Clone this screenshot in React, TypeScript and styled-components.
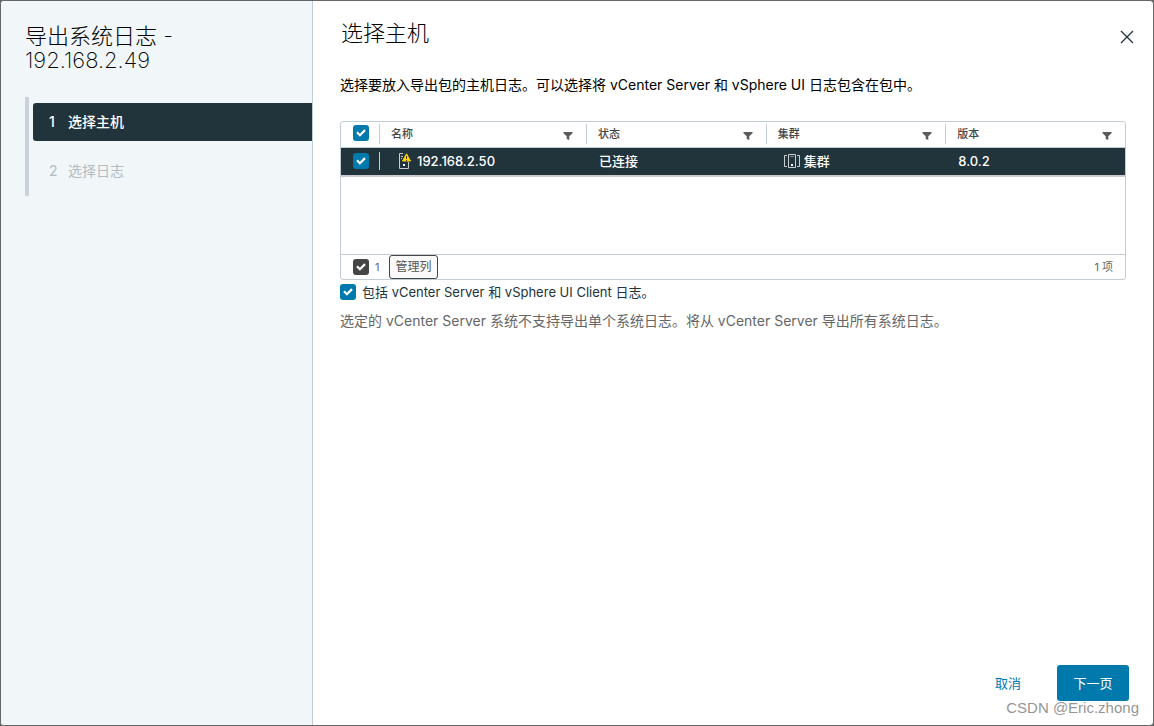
import React from 'react';
import styled, { createGlobalStyle } from 'styled-components';

const GlobalStyle = createGlobalStyle`
  * { box-sizing: border-box; }
  body {
    margin: 0;
    background: #666666;
    color: #000000;
    font-family: Inter, "Noto Sans CJK SC", sans-serif;
    font-size: 14px;
    line-height: 24px;
  }
  button, input { font: inherit; margin: 0; }
`;

const Dialog = styled.div`
  display: flex;
  min-height: 100vh;
  border: 1px solid #666666;
  border-radius: 4px;
  background: #ffffff;
  overflow: hidden;
`;

const Sidebar = styled.aside`
  flex: 0 0 312px;
  padding: 23px 0 24px 24px;
  border-right: 1px solid #c1cdd4;
  background: #f1f6f8;
`;

const WizardTitle = styled.h1`
  width: 180px;
  margin: 0 0 25px;
  font-size: 22px;
  font-weight: 200;
  line-height: 24px;
`;

const Steps = styled.ol`
  display: flex;
  flex-direction: column;
  gap: 11px;
  margin: 0;
  padding: 6px 0 6px 4px;
  border-left: 4px solid #c9d2d8;
  list-style: none;
`;

const Step = styled.button<{ $active?: boolean }>`
  display: flex;
  gap: 11px;
  width: 100%;
  height: 38px;
  padding: 0 16px;
  align-items: center;
  border: 0;
  border-radius: 3px 0 0 3px;
  background: ${(p) => (p.$active ? '#21333b' : 'transparent')};
  color: ${(p) => (p.$active ? '#ffffff' : '#b3bcc0')};
  font-weight: ${(p) => (p.$active ? 500 : 400)};
  text-align: left;
`;

const StepNumber = styled.span`
  width: 8px;
`;

const Main = styled.main`
  display: flex;
  flex: 1;
  flex-direction: column;
  min-width: 0;
  padding: 20px 24px 24px 27px;
`;

const PageHeader = styled.header`
  display: flex;
  justify-content: space-between;
  margin-bottom: 20px;
`;

const PageTitle = styled.h2`
  margin: 0;
  padding-left: 1px;
  font-size: 22px;
  font-weight: 300;
  line-height: 24px;
`;

const CloseButton = styled.button`
  display: grid;
  width: 16px;
  height: 32px;
  padding: 0;
  place-items: center;
  margin-right: -6px;
  border: 0;
  background: none;
  color: #21333b;
`;

const Intro = styled.p`
  margin: 0 0 24px;
`;

const Datagrid = styled.section`
  display: flex;
  flex-direction: column;
  height: 159px;
  margin-right: 3px;
  border: 1px solid #c1cdd4;
  border-radius: 3px;
`;

const Table = styled.table`
  width: 100%;
  border-collapse: collapse;
  table-layout: fixed;
`;

const CheckCol = styled.col`
  width: 38px;
`;

const NameCol = styled.col`
  width: 207px;
`;

const HeadCell = styled.th`
  height: 25px;
  padding: 0;
  border-bottom: 1px solid #c1cdd4;
  color: #454545;
  font-size: 11px;
  font-weight: 500;
  text-align: left;
`;

const HeadContent = styled.div`
  display: flex;
  height: 20px;
  padding: 0 12px 0 11px;
  align-items: center;
  justify-content: space-between;
  border-left: 1px solid #c1cdd4;
`;

const FilterButton = styled.button`
  display: grid;
  padding: 3px 0 0;
  border: 0;
  background: none;
  color: #5c5c5c;
`;

const Row = styled.tr`
  background: #21333b;
  color: #ffffff;
`;

const Cell = styled.td`
  height: 29px;
  padding: 0;
  border-bottom: 2px solid #cbcbcf;
  font-size: 13px;
  font-weight: 500;
  line-height: 20px;
`;

const CellContent = styled.div<{ $inset?: number; $line?: boolean }>`
  display: flex;
  height: 18px;
  gap: 4px;
  align-items: center;
  padding-left: ${(p) => p.$inset ?? 12}px;
  border-left: 1px solid ${(p) => (p.$line ? '#c1cdd4' : 'transparent')};
`;

const CheckSlot = styled.div<{ $raised?: boolean }>`
  display: flex;
  padding: 0 0 ${(p) => (p.$raised ? 3 : 0)}px 12px;
`;

const CheckFrame = styled.span`
  display: grid;
  flex: none;
  width: 16px;
  height: 16px;

  > * { grid-area: 1 / 1; }
  > svg { pointer-events: none; }
`;

const CheckInput = styled.input<{ $dark?: boolean }>`
  width: 16px;
  height: 16px;
  border-radius: 3px;
  appearance: none;
  background: ${(p) => (p.$dark ? '#454545' : '#0079ad')};
`;

const GridFooter = styled.footer`
  display: flex;
  height: 25px;
  margin-top: auto;
  padding: 0 12px;
  align-items: center;
  border-top: 1px solid #c1cdd4;
  color: #666666;
  font-size: 11px;
`;

const SelectedCount = styled.label`
  display: flex;
  gap: 6px;
  align-items: center;
`;

const ColumnsButton = styled.button`
  height: 24px;
  margin-left: 10px;
  padding: 0 5px;
  border: 1px solid #454545;
  border-radius: 3px;
  background: #fafafa;
  color: #565656;
  font-size: 12px;
  line-height: 20px;
`;

const ItemCount = styled.span`
  margin-left: auto;
`;

const IncludeLabel = styled.label`
  display: flex;
  gap: 6px;
  align-items: center;
  color: #21333b;
  font-size: 13px;
`;

const Note = styled.p`
  margin: 5px 0 0;
  color: #666666;
`;

const Actions = styled.div`
  display: flex;
  gap: 20px;
  margin-top: auto;
  justify-content: flex-end;
`;

const ActionButton = styled.button<{ $primary?: boolean }>`
  min-width: ${(p) => (p.$primary ? 72 : 58)}px;
  height: 36px;
  padding: 0 15px;
  border: 0;
  border-radius: 3px;
  background: ${(p) => (p.$primary ? '#0079ad' : 'transparent')};
  color: ${(p) => (p.$primary ? '#ffffff' : '#0079ad')};
  font-size: 13px;
`;

const Watermark = styled.span`
  position: absolute;
  right: 15px;
  bottom: 8px;
  color: #808080d9;
  font-family: "Liberation Sans", sans-serif;
  font-size: 15px;
  line-height: 20px;
`;

function Check({ label, dark }: { label?: string; dark?: boolean }) {
  return (
    <CheckFrame>
      <CheckInput type="checkbox" defaultChecked aria-label={label} $dark={dark} />
      <svg width="16" height="16" viewBox="0 0 16 16" fill="none" aria-hidden="true">
        <path d="M4 7.3 6.9 10.2 12 5.1" stroke="#fff" strokeWidth="2.2" />
      </svg>
    </CheckFrame>
  );
}

function HostIcon() {
  return (
    <svg width="16" height="16" viewBox="0 0 16 16" fill="none" aria-hidden="true">
      <path d="M6 .5H2.5v15h9V9" stroke="#c8ced1" />
      <path d="M4 3.5h2M4 5.5h1" stroke="#c8ced1" />
      <rect x="6" y="11" width="2" height="2" fill="#fff" />
      <path d="M9.5.8 13.5 8H5.5z" fill="#fdd008" stroke="#fdd008" strokeLinejoin="round" />
      <path d="M9.5 3v3M9.5 7v1" stroke="#4a3b00" />
    </svg>
  );
}

function ClusterIcon() {
  return (
    <svg width="16" height="16" viewBox="0 0 16 16" fill="none" aria-hidden="true">
      <path d="M4.5 1.5h7v13h-7zM3 2.5H.5v11H3M13 2.5h2.5v11H13" stroke="#c8ced1" />
      <path d="M6 3.5h4" stroke="#7c888d" />
      <rect x="7" y="11" width="2" height="2" fill="#fff" />
    </svg>
  );
}

function Column({ name }: { name: string }) {
  return (
    <HeadCell scope="col">
      <HeadContent>
        {name}
        <FilterButton aria-label={`筛选${name}`}>
          <svg width="12" height="10" viewBox="0 0 12 10" fill="currentColor" aria-hidden="true">
            <path d="M1.5 1h9v1.2L7.3 5.3V9L4.7 8V5.3L1.5 2.2z" />
          </svg>
        </FilterButton>
      </HeadContent>
    </HeadCell>
  );
}

export default function App() {
  return (
    <>
      <GlobalStyle />
      <Dialog role="dialog" aria-label="导出系统日志">
        <Sidebar>
          <WizardTitle>导出系统日志 - 192.168.2.49</WizardTitle>
          <Steps>
            <li>
              <Step $active>
                <StepNumber>1</StepNumber>
                <span>选择主机</span>
              </Step>
            </li>
            <li>
              <Step disabled>
                <StepNumber>2</StepNumber>
                <span>选择日志</span>
              </Step>
            </li>
          </Steps>
        </Sidebar>
        <Main>
          <PageHeader>
            <PageTitle>选择主机</PageTitle>
            <CloseButton aria-label="关闭">
              <svg width="14" height="14" viewBox="0 0 14 14" fill="none" stroke="currentColor" strokeWidth="1.3" aria-hidden="true">
                <path d="M1 1l12 12M13 1L1 13" />
              </svg>
            </CloseButton>
          </PageHeader>
          <Intro>选择要放入导出包的主机日志。可以选择将 vCenter Server 和 vSphere UI 日志包含在包中。</Intro>
          <Datagrid>
            <Table>
              <colgroup>
                <CheckCol />
                <NameCol />
                <col />
                <col />
                <col />
              </colgroup>
              <thead>
                <tr>
                  <HeadCell scope="col">
                    <CheckSlot $raised><Check label="全选" /></CheckSlot>
                  </HeadCell>
                  <Column name="名称" />
                  <Column name="状态" />
                  <Column name="集群" />
                  <Column name="版本" />
                </tr>
              </thead>
              <tbody>
                <Row>
                  <Cell>
                    <CheckSlot><Check label="选择 192.168.2.50" /></CheckSlot>
                  </Cell>
                  <Cell><CellContent $line $inset={17}><HostIcon />192.168.2.50</CellContent></Cell>
                  <Cell><CellContent>已连接</CellContent></Cell>
                  <Cell><CellContent $inset={17}><ClusterIcon />集群</CellContent></Cell>
                  <Cell><CellContent>8.0.2</CellContent></Cell>
                </Row>
              </tbody>
            </Table>
            <GridFooter>
              <SelectedCount><Check dark />1</SelectedCount>
              <ColumnsButton>管理列</ColumnsButton>
              <ItemCount>1 项</ItemCount>
            </GridFooter>
          </Datagrid>
          <IncludeLabel>
            <Check />
            包括 vCenter Server 和 vSphere UI Client 日志。
          </IncludeLabel>
          <Note>选定的 vCenter Server 系统不支持导出单个系统日志。将从 vCenter Server 导出所有系统日志。</Note>
          <Actions>
            <ActionButton>取消</ActionButton>
            <ActionButton $primary>下一页</ActionButton>
          </Actions>
        </Main>
      </Dialog>
      <Watermark>CSDN @Eric.zhong</Watermark>
    </>
  );
}
